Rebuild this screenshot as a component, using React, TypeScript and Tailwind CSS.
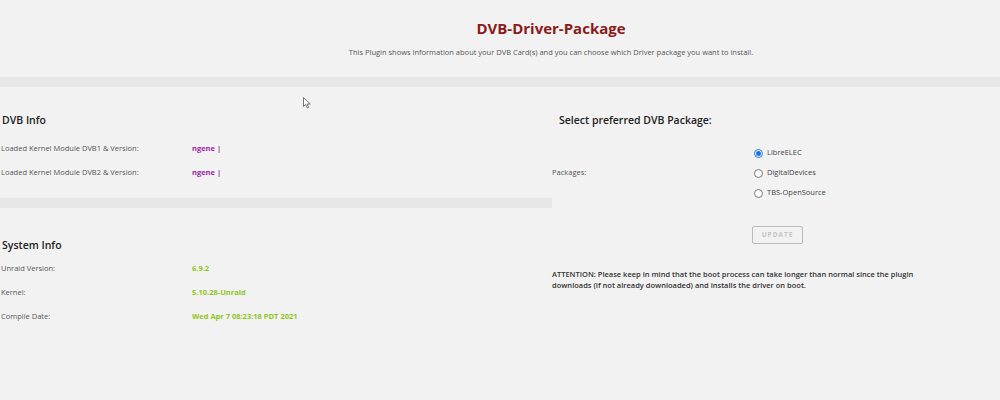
const FONT = { fontFamily: '"Open Sans", "Noto Sans", sans-serif' };

type Row = { label: string; value: string };

const DVB_ROWS: Row[] = [
  { label: 'Loaded Kernel Module DVB1 & Version:', value: 'ngene |' },
  { label: 'Loaded Kernel Module DVB2 & Version:', value: 'ngene |' },
];

const SYS_ROWS: Row[] = [
  { label: 'Unraid Version:', value: '6.9.2' },
  { label: 'Kernel:', value: '5.10.28-Unraid' },
  { label: 'Compile Date:', value: 'Wed Apr 7 08:23:18 PDT 2021' },
];

const PACKAGES = ['LibreELEC', 'DigitalDevices', 'TBS-OpenSource'];

function InfoRow({ row, tone }: { row: Row; tone: string }) {
  return (
    <div className="flex h-[24px] items-center text-[7.5px] leading-none">
      <span className="w-[192px] pl-[1px] text-[#555]">{row.label}</span>
      <span className={`font-bold ${tone}`}>{row.value}</span>
    </div>
  );
}

function Radio({ checked, label }: { checked: boolean; label: string }) {
  return (
    <div className="flex h-[20px] items-center gap-[4px] text-[7.5px] leading-none text-[#444]">
      {checked ? (
        <span className="flex h-[9px] w-[9px] items-center justify-center rounded-full border border-[#1a73e8] bg-white">
          <span className="h-[5px] w-[5px] rounded-full bg-[#1a73e8]" />
        </span>
      ) : (
        <span className="h-[9px] w-[9px] rounded-full border border-[#777] bg-white" />
      )}
      <span>{label}</span>
    </div>
  );
}

// mouse pointer captured in the screenshot
function Cursor() {
  return (
    <svg className="absolute left-[303px] top-[97px]" width="8" height="12" viewBox="0 0 8 12">
      <path d="M0.5 0.5 L0.5 9.5 L2.7 7.5 L4.3 11 L5.6 10.4 L4.1 7 L7.2 7 Z" fill="#fff" stroke="#555" strokeWidth="0.8" />
    </svg>
  );
}

export default function App() {
  return (
    <div className="relative h-[400px] w-full overflow-hidden bg-[#f2f2f2]" style={FONT}>
      <header className="flex flex-col items-center pl-[102px] pt-[17px]">
        <h1 className="text-[15px] font-bold leading-[22px] text-[#8b1a1a]">DVB-Driver-Package</h1>
        <p className="mt-[7px] text-[7.5px] leading-[12px] text-[#555]">
          This Plugin shows information about your DVB Card(s) and you can choose which Driver package you want to install.
        </p>
      </header>

      <div className="mt-[19px] h-[10px] bg-[#e7e7e7]" />

      <div className="flex">
        <section className="w-[552px] shrink-0">
          <h2 className="mt-[24px] pl-[2px] text-[10.5px] font-semibold leading-[18px] text-[#222]">DVB Info</h2>
          <div className="mt-[8px]">
            {DVB_ROWS.map((r, i) => (
              <InfoRow key={i} row={r} tone="text-[#9c1fa4]" />
            ))}
          </div>
          <div className="mt-[13px] h-[10px] bg-[#e7e7e7]" />
          <h2 className="mt-[28px] pl-[2px] text-[10.5px] font-semibold leading-[18px] text-[#222]">System Info</h2>
          <div className="mt-[3px]">
            {SYS_ROWS.map((r, i) => (
              <InfoRow key={i} row={r} tone="text-[#8fc71a]" />
            ))}
          </div>
        </section>

        <section className="flex-1">
          <h2 className="mt-[24px] pl-[7px] text-[10.5px] font-semibold leading-[18px] text-[#222]">
            Select preferred DVB Package:
          </h2>
          <div className="mt-[14px] flex items-center">
            <span className="w-[202px] text-[7.5px] leading-none text-[#555]">Packages:</span>
            <div className="flex flex-col">
              {PACKAGES.map((p, i) => (
                <Radio key={p} checked={i === 0} label={p} />
              ))}
            </div>
          </div>
          <div className="mt-[16px] pl-[200px]">
            <button
              disabled
              className="h-[18px] w-[51px] rounded-[2px] border border-[#bbb] bg-[#f2f2f2] text-[6.5px] font-bold tracking-[1px] text-[#c4c4c4]"
            >
              UPDATE
            </button>
          </div>
          <p className="mt-[25px] w-[385px] text-[7.5px] font-semibold leading-[11px] text-[#333]">
            ATTENTION: Please keep in mind that the boot process can take longer than normal since the plugin downloads (if not
            already downloaded) and installs the driver on boot.
          </p>
        </section>
      </div>

      <Cursor />
    </div>
  );
}
